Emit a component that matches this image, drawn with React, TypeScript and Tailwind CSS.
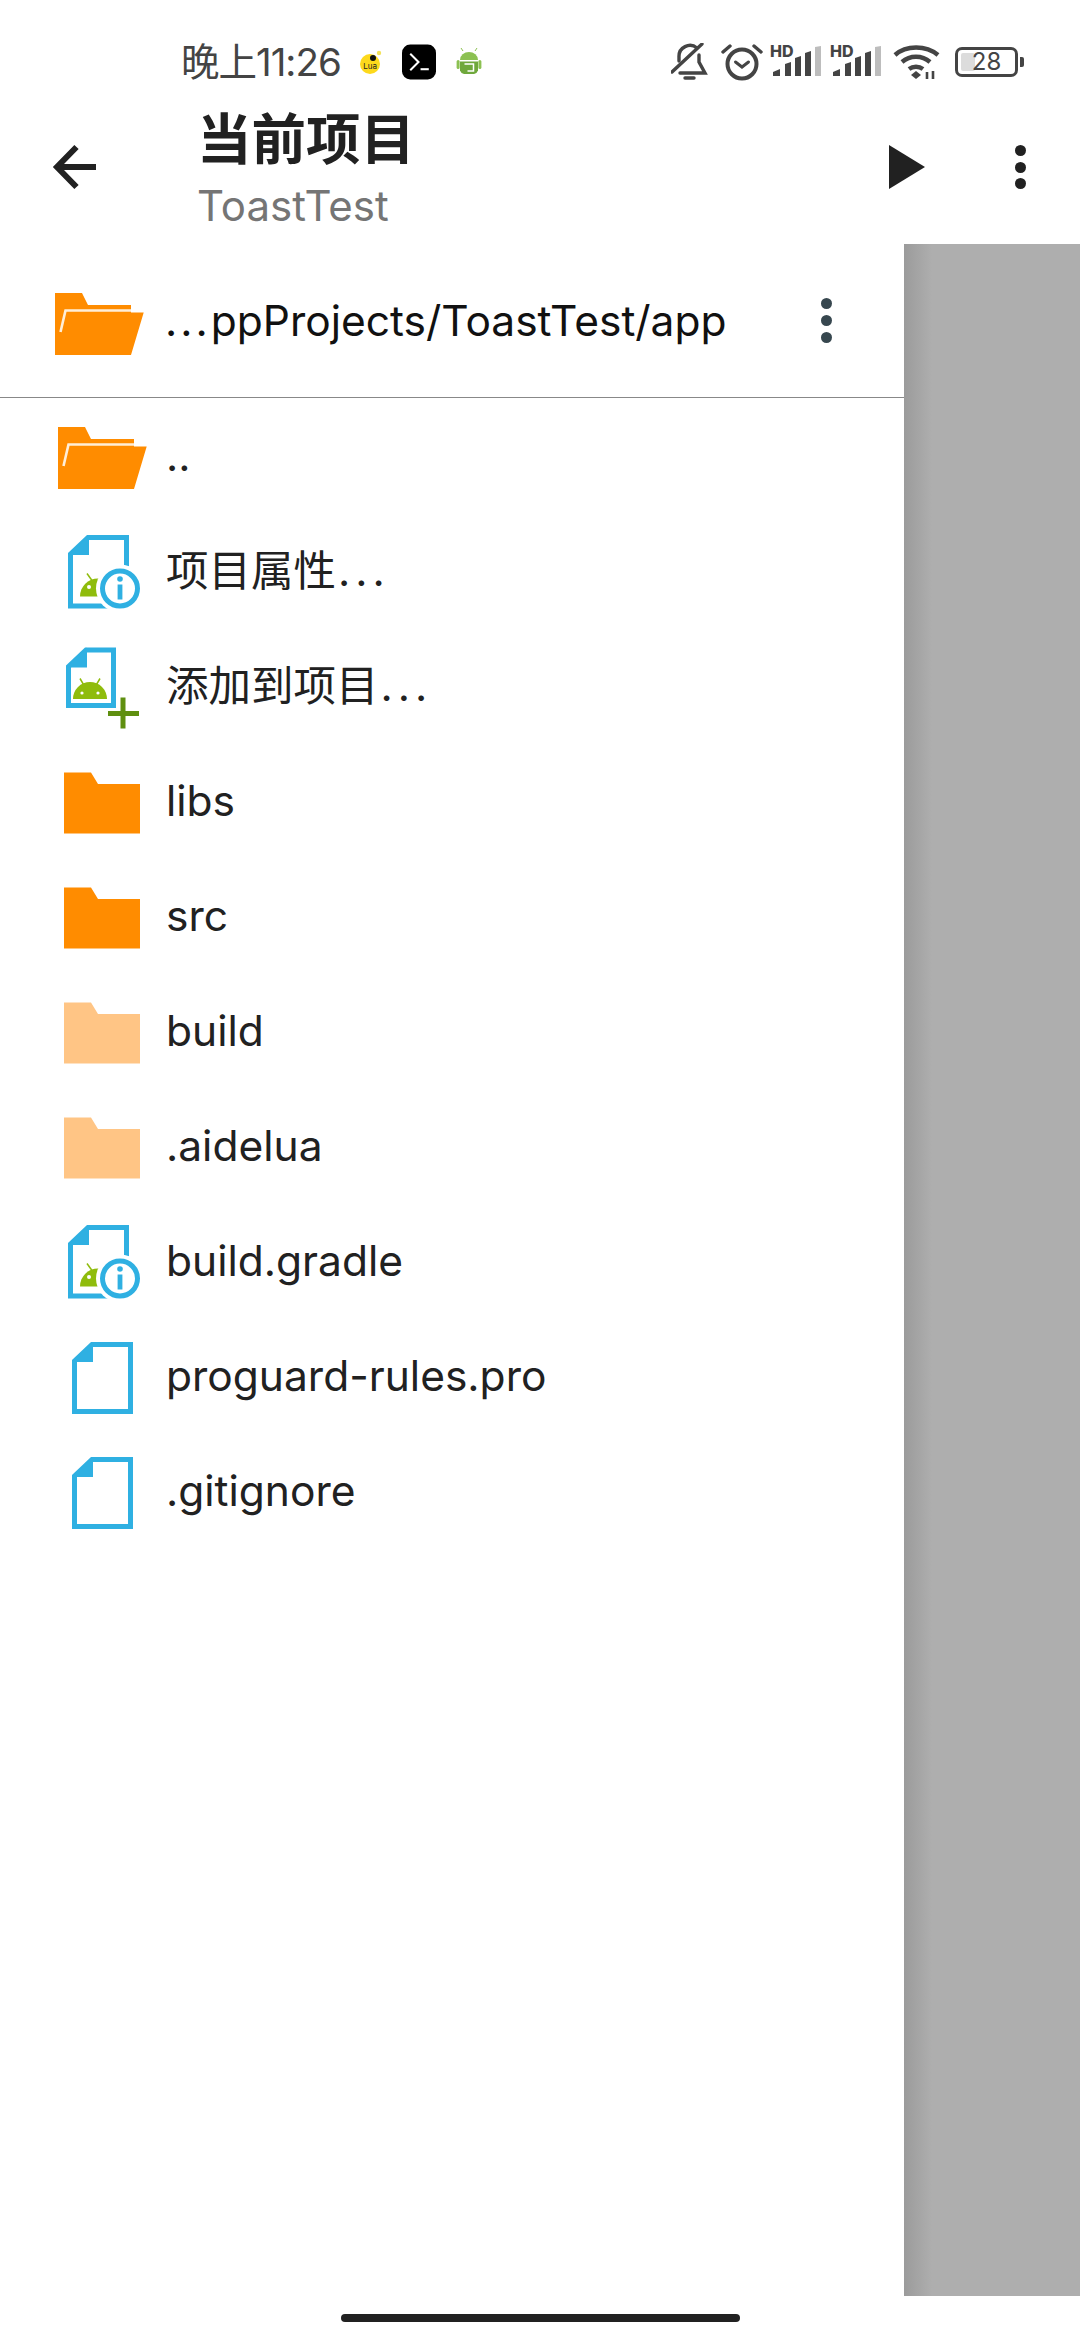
import React from "react";

const SANS = "font-['Inter','Noto_Sans_CJK_SC',sans-serif]";

const Back = () => (
  <svg width="46" height="46" viewBox="0 0 46 46" className="text-[#212121]">
    <path d="M44 23H6M24.5 3 5 23l19.5 20" fill="none" stroke="currentColor" strokeWidth="6" />
  </svg>
);

const OpenFolder = () => (
  <svg width="100" height="100" viewBox="0 0 100 100">
    <path d="M8 21H35L41 33H84V40.5H96.7L84 83H8Z" fill="#ff8c00" />
    <path d="M84 38.5H18.5L13.5 60" fill="none" stroke="#ffeed8" strokeWidth="2.6" />
  </svg>
);

const SolidFolder = ({ light }: { light?: boolean }) => (
  <svg width="100" height="100" viewBox="0 0 100 100">
    <path d="M14 21.5H41L48 33H90V82.5H14Z" fill={light ? "#ffc585" : "#ff8c00"} />
  </svg>
);

const Doc = ({ x, y, w, h }: { x: number; y: number; w: number; h: number }) => (
  <>
    <path d={`M${x + 2.5} ${y + 19} L${x + 20} ${y + 2.5} H${x + w - 2.5} V${y + h - 2.5} H${x + 2.5} Z`} fill="#fff" stroke="#2fb0e2" strokeWidth="5" />
    <path d={`M${x} ${y + 20} L${x + 21} ${y} V${y + 20} Z`} fill="#2fb0e2" />
  </>
);

const FileIcon = () => (
  <svg width="100" height="100" viewBox="0 0 100 100">
    <Doc x={22} y={16} w={61} h={72} />
  </svg>
);

const InfoFile = () => (
  <svg width="100" height="100" viewBox="0 0 100 100">
    <Doc x={18} y={14} w={61} h={73.5} />
    <path d="M30 75.5a18 18 0 0 1 36 0Z" fill="#8fbc0c" />
    <path d="M37 52.5l5 7" stroke="#8fbc0c" strokeWidth="1.5" />
    <circle cx="39" cy="66" r="2" fill="#fff" />
    <circle cx="70" cy="67.5" r="24" fill="#fff" />
    <circle cx="70" cy="67.5" r="17.5" fill="#fff" stroke="#2fb0e2" strokeWidth="5" />
    <circle cx="70" cy="58" r="2.8" fill="#2fb0e2" />
    <rect x="67.6" y="63.5" width="4.8" height="15" fill="#2fb0e2" />
  </svg>
);

const AddFile = () => (
  <svg width="100" height="100" viewBox="0 0 100 100">
    <Doc x={16} y={11.5} w={50} h={60.5} />
    <path d="M23 63a17 17 0 0 1 34 0Z" fill="#8fbc0c" />
    <path d="M30 42.5l3.5 6M50 42.5l-3.5 6" stroke="#8fbc0c" strokeWidth="1.5" />
    <circle cx="32" cy="57" r="1.6" fill="#fff" />
    <circle cx="48" cy="57" r="1.6" fill="#fff" />
    <path d="M73 61.5v31M58 77.5h31" stroke="#5f8f10" strokeWidth="5" />
  </svg>
);

const Signal = () => (
  <div className="relative w-[51px] h-[32px]">
    <span className="absolute left-0 top-[-3px] text-[16px] leading-[16px] font-extrabold text-[#444] font-['Inter',sans-serif]">HD</span>
    <svg width="51" height="32" viewBox="0 0 51 32" className="absolute left-0 top-0">
      <path d="M3 30v-4l7-3v7Z" fill="#444" />
      <path d="M15 30V18l6-2v14Z" fill="#444" />
      <path d="M25 30V12l6-2v20Z" fill="#444" />
      <path d="M35 30V7l6-2v25Z" fill="#444" />
      <path d="M45 30V1l6-1v30Z" fill="#bdbdbd" />
    </svg>
  </div>
);

const StatusBar = () => (
  <div className="h-[84px] pt-[44px] flex text-[#444]">
    <div className="ml-[181px] flex items-center h-[36px]">
      <span className={`${SANS} text-[38.5px] leading-[36px] tracking-[-1px] w-[173px] whitespace-nowrap`}>晚上11:26</span>
      <svg width="32" height="34" viewBox="0 0 32 34">
        <circle cx="16" cy="19" r="10" fill="#fdd91c" />
        <circle cx="19" cy="13" r="3" fill="#111" />
        <circle cx="25" cy="8" r="2.2" fill="#f3e25a" />
        <text x="16" y="24" textAnchor="middle" fontSize="8" fill="#222" fontFamily="Inter">Lua</text>
      </svg>
      <svg width="34" height="36" viewBox="0 0 33 34" className="ml-[16px]">
        <rect width="33" height="34" rx="8" fill="#000" />
        <path d="M8 9l8 8-8 8" fill="none" stroke="#fff" strokeWidth="2" />
        <path d="M18 24h8" stroke="#fff" strokeWidth="2" />
      </svg>
      <svg width="30" height="34" viewBox="0 0 30 34" className="ml-[18px]">
        <path d="M6 15a9 8 0 0 1 18 0h-18Z" fill="#8cc152" />
        <path d="M9 6 7 3M21 6l2-3" stroke="#8cc152" strokeWidth="1" />
        <path d="M6 16.5h18v9q-1 3-4 3.5h-10q-3-.5-4-3.5Z" fill="#6fa83c" />
        <rect x="2.6" y="15" width="3" height="9" rx="1.5" fill="#8cc152" />
        <rect x="24.4" y="15" width="3" height="9" rx="1.5" fill="#8cc152" />
        <path d="M10.5 19h9v7h-6" fill="none" stroke="#fff" strokeWidth="1.5" />
      </svg>
    </div>
    <div className="ml-auto mr-[56px] flex items-center h-[36px]">
      <svg width="37" height="38" viewBox="0 0 37 38" fill="none" stroke="#444" strokeWidth="3.4" strokeLinecap="round">
        <path d="M1 29 31 1" />
        <path d="M8 18V14A11 11 0 0 1 26 5M28 12v7l6 11H9" />
        <path d="M14 35h9" />
      </svg>
      <svg width="42" height="38" viewBox="0 0 42 38" fill="none" stroke="#444" strokeWidth="4" strokeLinecap="round" className="ml-[13px]">
        <circle cx="21" cy="21" r="14.5" />
        <path d="M14.5 19l6.5 5 6.5-5" strokeWidth="3" />
        <path d="M2 9l7-6M40 9l-7-6" strokeWidth="3.4" />
      </svg>
      <div className="ml-[7px]"><Signal /></div>
      <div className="ml-[9px]"><Signal /></div>
      <svg width="47" height="36" viewBox="0 0 47 36" fill="none" stroke="#444" strokeWidth="4.4" className="ml-[12px]">
        <path d="M2 11C13 1 33 1 45 11" />
        <path d="M9 18c8-7 20-7 28 0" />
        <path d="M16 25c4-3 10-3 14 0" />
        <path d="M23 27l5 4-5 4-5-4Z" fill="#444" stroke="none" />
        <path d="M34 28v7M40 27v8" strokeWidth="2.6" />
      </svg>
      <div className="ml-[15px] flex items-center">
        <div className="relative w-[63px] h-[30px] rounded-[7px] border-[3px] border-[#444] overflow-hidden">
          <div className="absolute left-[3px] top-[3px] bottom-[3px] w-[14px] bg-[#dcdcdc] rounded-[2px]" />
          <span className={`absolute inset-0 text-center ${SANS} text-[24px] leading-[24px] text-[#444]`}>28</span>
        </div>
        <div className="ml-[2px] w-[4px] h-[10px] rounded-r-[2px] bg-[#444]" />
      </div>
    </div>
  </div>
);

const rows: { name: string; more?: boolean; icon: React.ReactNode }[] = [
  { name: "..", icon: <OpenFolder /> },
  { name: "项目属性", more: true, icon: <InfoFile /> },
  { name: "添加到项目", more: true, icon: <AddFile /> },
  { name: "libs", icon: <SolidFolder /> },
  { name: "src", icon: <SolidFolder /> },
  { name: "build", icon: <SolidFolder light /> },
  { name: ".aidelua", icon: <SolidFolder light /> },
  { name: "build.gradle", icon: <InfoFile /> },
  { name: "proguard-rules.pro", icon: <FileIcon /> },
  { name: ".gitignore", icon: <FileIcon /> },
];

const Dots = ({ color, gap }: { color: string; gap: string }) => (
  <div className={`flex flex-col ${gap}`}>
    <div className={`w-[11px] h-[11px] rounded-full ${color}`} />
    <div className={`w-[11px] h-[11px] rounded-full ${color}`} />
    <div className={`w-[11px] h-[11px] rounded-full ${color}`} />
  </div>
);

export default function App() {
  return (
    <div className={`w-[1080px] h-[2340px] bg-white flex flex-col ${SANS}`}>
      <StatusBar />
      <header className="h-[160px] flex items-start">
        <div className="ml-[52px] mt-[60px]"><Back /></div>
        <div className="ml-[95px] mt-[25px] flex flex-col">
          <h1 className="text-[54.5px] leading-[60px] font-bold text-[#212121] ml-[4px]">当前项目</h1>
          <p className="text-[42px] leading-[50px] text-[#757575] mt-[12px] ml-[4px]">ToastTest</p>
        </div>
        <div className="ml-auto mt-[61px] mr-[54px] flex items-center gap-[90px]">
          <svg width="36" height="44" viewBox="0 0 36 44"><path d="M0 0 36 22 0 44Z" fill="#212121" /></svg>
          <Dots color="bg-[#212121]" gap="gap-[5.5px]" />
        </div>
      </header>
      <div className="flex h-[2052px]">
        <aside className="w-[904px] flex flex-col">
          <div className="h-[153px] flex items-center border-b border-[#888] box-content">
            <div className="ml-[47px] mt-[2px]"><OpenFolder /></div>
            <span className="ml-[18px] text-[42.5px] text-[#111]"><span className="tracking-[3px]">...</span>ppProjects/ToastTest/app</span>
            <div className="ml-auto mr-[72px]"><Dots color="bg-[#37474f]" gap="gap-[6px]" /></div>
          </div>
          <ul className="flex flex-col">
            {rows.map((r) => (
              <li key={r.name} className="h-[115px] flex items-center pl-[50px] gap-[16px]">
                {r.icon}
                <span className="text-[42.5px] text-[#212121]">
                  {r.name}
                  {r.more && <span className="tracking-[5px] ml-[2px]">...</span>}
                </span>
              </li>
            ))}
          </ul>
        </aside>
        <div className="flex-1 bg-[linear-gradient(90deg,#9b9b9b,#aeaeae_28px)]" />
      </div>
      <div className="flex-1 flex justify-center pt-[18px]">
        <div className="w-[399px] h-[8px] rounded-full bg-[#212121]" />
      </div>
    </div>
  );
}
